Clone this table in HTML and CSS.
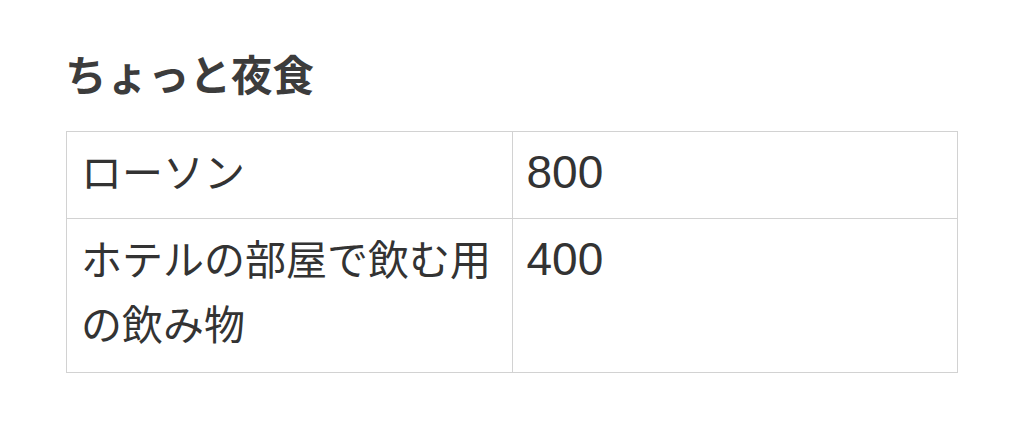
FILE: index.html
```html
<!DOCTYPE html>
<html lang="ja">
<head>
<meta charset="utf-8">
<link rel="stylesheet" href="styles.css">
</head>
<body>
<main class="page">
  <h3 class="title">ちょっと夜食</h3>
  <table class="costs">
    <tr>
      <td>ローソン</td>
      <td><span class="num">800</span></td>
    </tr>
    <tr class="tall">
      <td>ホテルの部屋で飲む用の飲み物</td>
      <td><span class="num">400</span></td>
    </tr>
  </table>
</main>
</body>
</html>
```
FILE: styles.css
```css
html, body {
  margin: 0;
  padding: 0;
  background: #fff;
}
.page {
  padding: 43px 66px 0;
  font-family: "Noto Sans CJK JP", "Noto Sans", sans-serif;
  color: #333;
}
.title {
  margin: 0 0 28px -1px;
  font-size: 41.5px;
  line-height: 60px;
  font-weight: 700;
  color: #3c3c3c;
}
.costs {
  width: 100%;
  border-collapse: collapse;
  table-layout: fixed;
}
.costs td {
  border: 1px solid #d2d2d2;
  padding: 6px 14px 15px;
  font-size: 41px;
  line-height: 65px;
  vertical-align: top;
  color: #333;
}
.costs .tall td {
  padding-bottom: 17px;
}
.num {
  font-family: "Liberation Sans", Arial, sans-serif;
  font-size: 46px;
  line-height: 1;
}
```
